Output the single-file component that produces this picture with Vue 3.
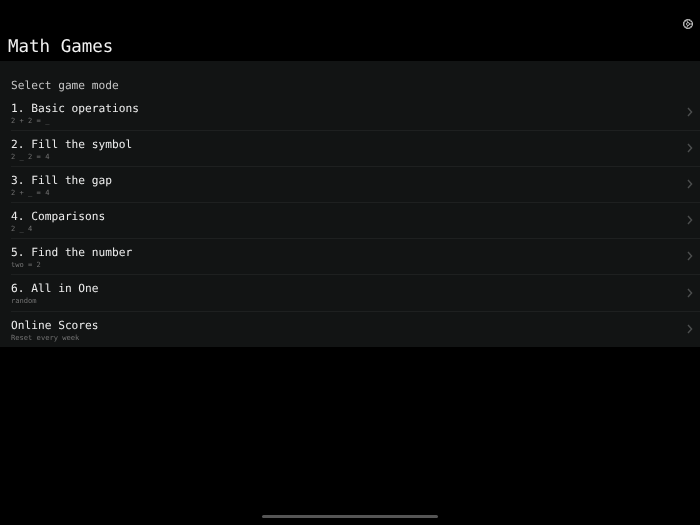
<script setup>
const modes = [
  { title: '1. Basic operations', sub: '2 + 2 = _' },
  { title: '2. Fill the symbol', sub: '2 _ 2 = 4' },
  { title: '3. Fill the gap', sub: '2 + _ = 4' },
  { title: '4. Comparisons', sub: '2 _ 4' },
  { title: '5. Find the number', sub: 'two = 2' },
  { title: '6. All in One', sub: 'random' },
  { title: 'Online Scores', sub: 'Reset every week' },
];
</script>

<template>
  <div class="screen">
    <div class="topbar">
      <svg class="gear" width="12" height="12" viewBox="0 0 12 12">
        <circle cx="6" cy="6" r="4.2" fill="none" stroke="#c8c8c8" stroke-width="1.3" stroke-dasharray="1.6 0.6" />
        <circle cx="6" cy="6" r="4.6" fill="none" stroke="#c8c8c8" stroke-width="0.7" />
        <circle cx="6" cy="6" r="1.5" fill="none" stroke="#c8c8c8" stroke-width="0.9" />
        <path d="M4.5 2.5 6 4.5M9.5 6H7.5M4.5 9.5 6 7.5" stroke="#c8c8c8" stroke-width="0.9" />
      </svg>
    </div>
    <h1 class="title">Math Games</h1>
    <div class="panel">
      <div class="heading">Select game mode</div>
      <div v-for="m in modes" :key="m.title" class="row">
        <div class="texts">
          <div class="name">{{ m.title }}</div>
          <div class="sub">{{ m.sub }}</div>
        </div>
        <svg class="chev" width="6" height="10" viewBox="0 0 6 10">
          <path d="M1 1l3.6 4L1 9" fill="none" stroke="#4c4e4e" stroke-width="1.4" />
        </svg>
      </div>
    </div>
    <div class="homebar"></div>
  </div>
</template>

<style>
html, body {
  margin: 0;
  background: #000;
}
</style>

<style scoped>
.screen {
  width: 700px;
  height: 525px;
  background: #000;
  display: flex;
  flex-direction: column;
  font-family: "DejaVu Sans Mono", monospace;
  text-rendering: geometricPrecision;
  overflow: hidden;
}
.topbar {
  height: 36px;
  display: flex;
  justify-content: flex-end;
  align-items: flex-end;
  padding-right: 6px;
  box-sizing: border-box;
  padding-bottom: 6px;
}
.title {
  margin: 0;
  height: 25px;
  padding-left: 8px;
  font-size: 17.5px;
  font-weight: 400;
  line-height: 22px;
  color: #f2f2f2;
  will-change: opacity;
}
.panel {
  background: #121414;
  height: 286px;
  display: flex;
  flex-direction: column;
}
.heading {
  height: 34px;
  flex: none;
  padding: 17.5px 0 0 11px;
  box-sizing: border-box;
  font-size: 11.2px;
  line-height: 14px;
  color: #c4c4c4;
  will-change: opacity;
}
.row {
  height: 36.1px;
  flex: none;
  margin-left: 11px;
  padding-right: 7px;
  box-sizing: border-box;
  border-bottom: 1px solid #1e2020;
  display: flex;
  align-items: center;
  justify-content: space-between;
}
.row:last-child {
  border-bottom: none;
}
.texts {
  align-self: flex-start;
  padding-top: 7px;
  will-change: opacity;
}
.name {
  font-size: 11.2px;
  line-height: 14px;
  color: #ededed;
}
.sub {
  font-size: 7.1px;
  line-height: 9px;
  color: #737373;
}
.chev {
  margin-top: -1px;
}
.homebar {
  width: 176px;
  height: 3px;
  border-radius: 2px;
  background: #555;
  margin: 168px 0 0 262px;
}
</style>
